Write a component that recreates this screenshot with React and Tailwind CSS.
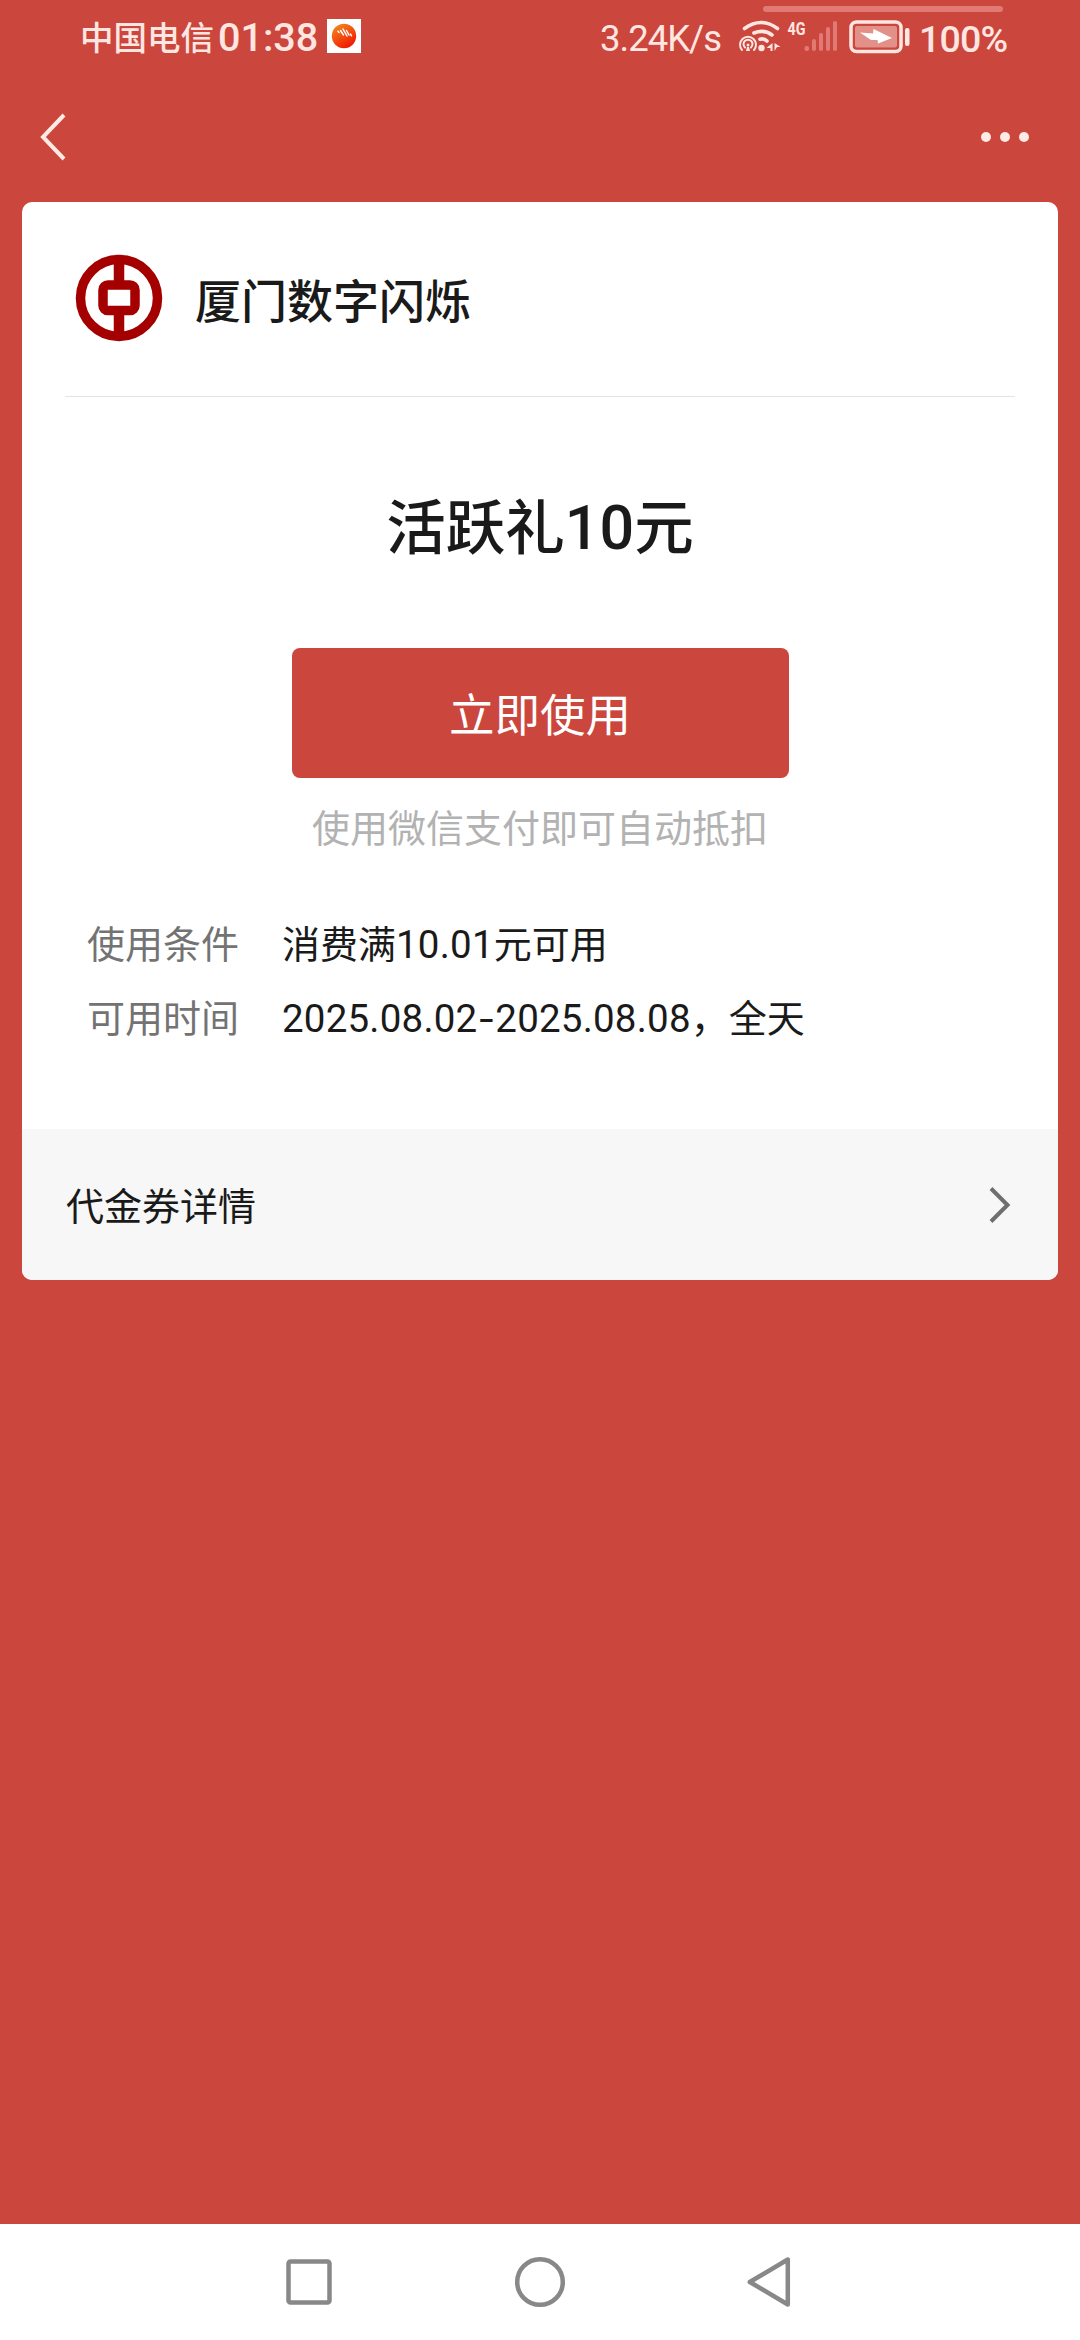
function StatusBar() {
  return (
    <div className="relative flex h-[72px] shrink-0 items-start text-[#ffe6e1]">
      <div className="absolute left-[763px] top-[6px] h-[6px] w-[240px] rounded-full bg-[#e17a75]" />
      <span className="ml-[80px] mt-[11px] w-[138px] whitespace-nowrap text-[33.5px] leading-[50px] font-medium">中国电信</span>
      <span className="mt-[13px] w-[109px] whitespace-nowrap font-[Roboto,sans-serif] text-[39.5px] leading-[50px] font-medium">01:38</span>
      <svg className="mt-[19px]" width="34" height="34" viewBox="0 0 34 34">
        <defs>
          <linearGradient id="ball" x1="0" y1="0" x2="0.6" y2="1">
            <stop offset="0" stopColor="#f5921c" />
            <stop offset="1" stopColor="#f01a05" />
          </linearGradient>
        </defs>
        <rect width="34" height="34" fill="#fff" />
        <circle cx="17" cy="17" r="12.2" fill="url(#ball)" />
        <path d="M11 12.200l1 1.200M13.500 11.500l3 4.500M16 10l4 7M19.500 11.500l2.500 4.500M23.500 15l1 1.800" stroke="#fff" strokeWidth="1.500" strokeLinecap="round" fill="none" />
      </svg>
      <span className="ml-[239px] mt-[14px] w-[136px] whitespace-nowrap font-[Roboto,sans-serif] text-[36.5px] leading-[50px] tracking-[-1px]">3.24K/s</span>
      <svg className="mt-[14px]" width="104" height="42" viewBox="736 14 104 42" fill="none">
        <g stroke="#ffe6e1" strokeWidth="3.600" strokeLinecap="round">
          <path d="M744.500 28.500Q761 16.500 777.500 28.500" />
          <path d="M754 33Q764 29 772 35" />
          <path d="M760 39.200Q764 38 767 41" />
        </g>
        <g stroke="#ffe6e1" strokeWidth="2" strokeLinecap="round">
          <path d="M742 50A8 8 0 1 1 754 50" />
          <path d="M745 47.500A4.500 4.500 0 1 1 751 47.500" />
        </g>
        <circle cx="748" cy="45" r="1.500" fill="#ffe6e1" />
        <path d="M747 47h2l1 4h-4z" fill="#ffe6e1" />
        <circle cx="761.500" cy="48" r="3.200" fill="#ffe6e1" />
        <path d="M772.500 43v8h-2v-3h-4zM774.500 51v-8l6 4h-3.500z" fill="#ffe6e1" />
        <g fill="#e17a75">
          <rect x="804.500" y="46" width="4.500" height="5" rx="2" />
          <rect x="812" y="39" width="4" height="12" rx="2" />
          <rect x="819" y="33" width="4" height="18" rx="2" />
          <rect x="826" y="27" width="4" height="24" rx="2" />
          <rect x="833" y="21" width="4" height="30" rx="2" />
        </g>
        <text x="787.500" y="34.500" fontSize="19" fontWeight="700" fontFamily="Roboto, sans-serif" textLength="18" lengthAdjust="spacingAndGlyphs" fill="#ffe6e1">4G</text>
      </svg>
      <svg className="ml-[8px] mt-[19px]" width="64" height="36" viewBox="848 19 64 36" fill="none">
        <rect x="851" y="22" width="50" height="29.500" rx="5.500" stroke="#ffe6e1" strokeWidth="3.500" />
        <rect x="855" y="26" width="42" height="21.500" rx="2" fill="#e39089" />
        <path d="M860 32.500L873 33.500 873.500 29 892 38 878 43.500 877.500 40 871 40z" fill="#fff" />
        <rect x="905" y="28" width="4.500" height="18" rx="2" fill="#ffe6e1" />
      </svg>
      <span className="ml-[7px] mt-[14px] whitespace-nowrap font-[Roboto,sans-serif] text-[37.500px] leading-[50px] font-medium tracking-[-0.8px]">100%</span>
    </div>
  );
}

function TopBar() {
  return (
    <div className="flex h-[130px] shrink-0 items-center justify-between pl-[38px] pr-[51px]">
      <svg width="30" height="50" viewBox="0 0 30 50" fill="none">
        <path d="M26 3L5 25l21 22" stroke="#ffeae5" strokeWidth="4" />
      </svg>
      <div className="flex gap-[9px]">
        <i className="size-[10px] rounded-full bg-[#ffeae5]" />
        <i className="size-[10px] rounded-full bg-[#ffeae5]" />
        <i className="size-[10px] rounded-full bg-[#ffeae5]" />
      </div>
    </div>
  );
}

function BankLogo() {
  return (
    <svg className="-mt-[3px]" width="88" height="88" viewBox="0 0 88 88" fill="none">
      <circle cx="44" cy="44" r="38.500" stroke="#a40000" strokeWidth="9.500" />
      <path d="M44 6v26M44 56v26" stroke="#a40000" strokeWidth="10.500" />
      <rect x="28" y="31" width="32" height="25.500" rx="5" stroke="#a40000" strokeWidth="9.500" />
    </svg>
  );
}

function Num({ children }) {
  return <span className="font-[Roboto,sans-serif] text-[38.5px] leading-none tracking-[0.2px]">{children}</span>;
}

function Row({ label, children }) {
  return (
    <div className="flex h-[74px] items-center text-[38px] leading-[74px]">
      <span className="w-[195px] text-[#737373]">{label}</span>
      <span className="whitespace-nowrap text-[#1a1a1a]">{children}</span>
    </div>
  );
}

function VoucherCard() {
  return (
    <div className="mx-[22px] flex h-[1078px] flex-col overflow-hidden rounded-[10px] bg-white text-[#1a1a1a]">
      <div className="mx-[43px] flex h-[195px] shrink-0 items-center border-b border-[#e4e4e4] pl-[10px]">
        <BankLogo />
        <span className="-mt-px ml-[32px] text-[46px] font-medium">厦门数字闪烁</span>
      </div>
      <div className="flex flex-col items-center">
        <div className="mt-[81px] h-[90px] text-[59.5px] leading-[90px] font-medium">
          活跃礼<span className="font-[Roboto,sans-serif] text-[61px] leading-none font-medium">10</span>元
        </div>
        <button className="mt-[80px] flex h-[130px] w-[497px] items-center justify-center rounded-[8px] bg-[#cb463d] text-[45.5px] leading-[60px] text-white">
          <span className="-mt-[2px]">立即使用</span>
        </button>
        <div className="mt-[18px] text-[38px] leading-[60px] text-[#b2b2b2]">使用微信支付即可自动抵扣</div>
      </div>
      <div className="ml-[65px] mt-[49px]">
        <Row label="使用条件">消费满<Num>10.01</Num>元可用</Row>
        <Row label="可用时间">
          <Num>2025.08.02<span className="font-[Inter,sans-serif]">-</span>2025.08.08</Num>，全天
        </Row>
      </div>
      <div className="mt-auto flex h-[151px] shrink-0 items-center justify-between bg-[#f7f7f7] pl-[44px] pr-[46px]">
        <span className="-mt-[2px] text-[38px]">代金券详情</span>
        <svg width="24" height="40" viewBox="0 0 24 40" fill="none">
          <path d="M3 3.500L19.500 20 3 36.500" stroke="#6f6f6f" strokeWidth="4" />
        </svg>
      </div>
    </div>
  );
}

function NavBar() {
  return (
    <div className="mt-auto flex h-[116px] shrink-0 items-center bg-white pl-[284px]">
      <svg width="50" height="52" viewBox="0 0 50 52" fill="none" stroke="#888" strokeWidth="4.500">
        <rect x="4.500" y="5.500" width="41" height="41" rx="2" />
      </svg>
      <svg className="ml-[180px]" width="52" height="52" viewBox="0 0 52 52" fill="none" stroke="#888" strokeWidth="4.500">
        <circle cx="26" cy="26" r="22.800" />
      </svg>
      <svg className="ml-[180px]" width="46" height="52" viewBox="0 0 46 52" fill="none" stroke="#888" strokeWidth="4.500" strokeLinejoin="round">
        <path d="M41.800 3.500v45L3.800 26z" />
      </svg>
    </div>
  );
}

export default function App() {
  return (
    <div className={'flex h-[2340px] w-[1080px] flex-col overflow-hidden bg-[#cb463d] font-["Noto_Sans_CJK_SC",sans-serif]'} lang="zh-CN">
      <StatusBar />
      <TopBar />
      <VoucherCard />
      <NavBar />
    </div>
  );
}
